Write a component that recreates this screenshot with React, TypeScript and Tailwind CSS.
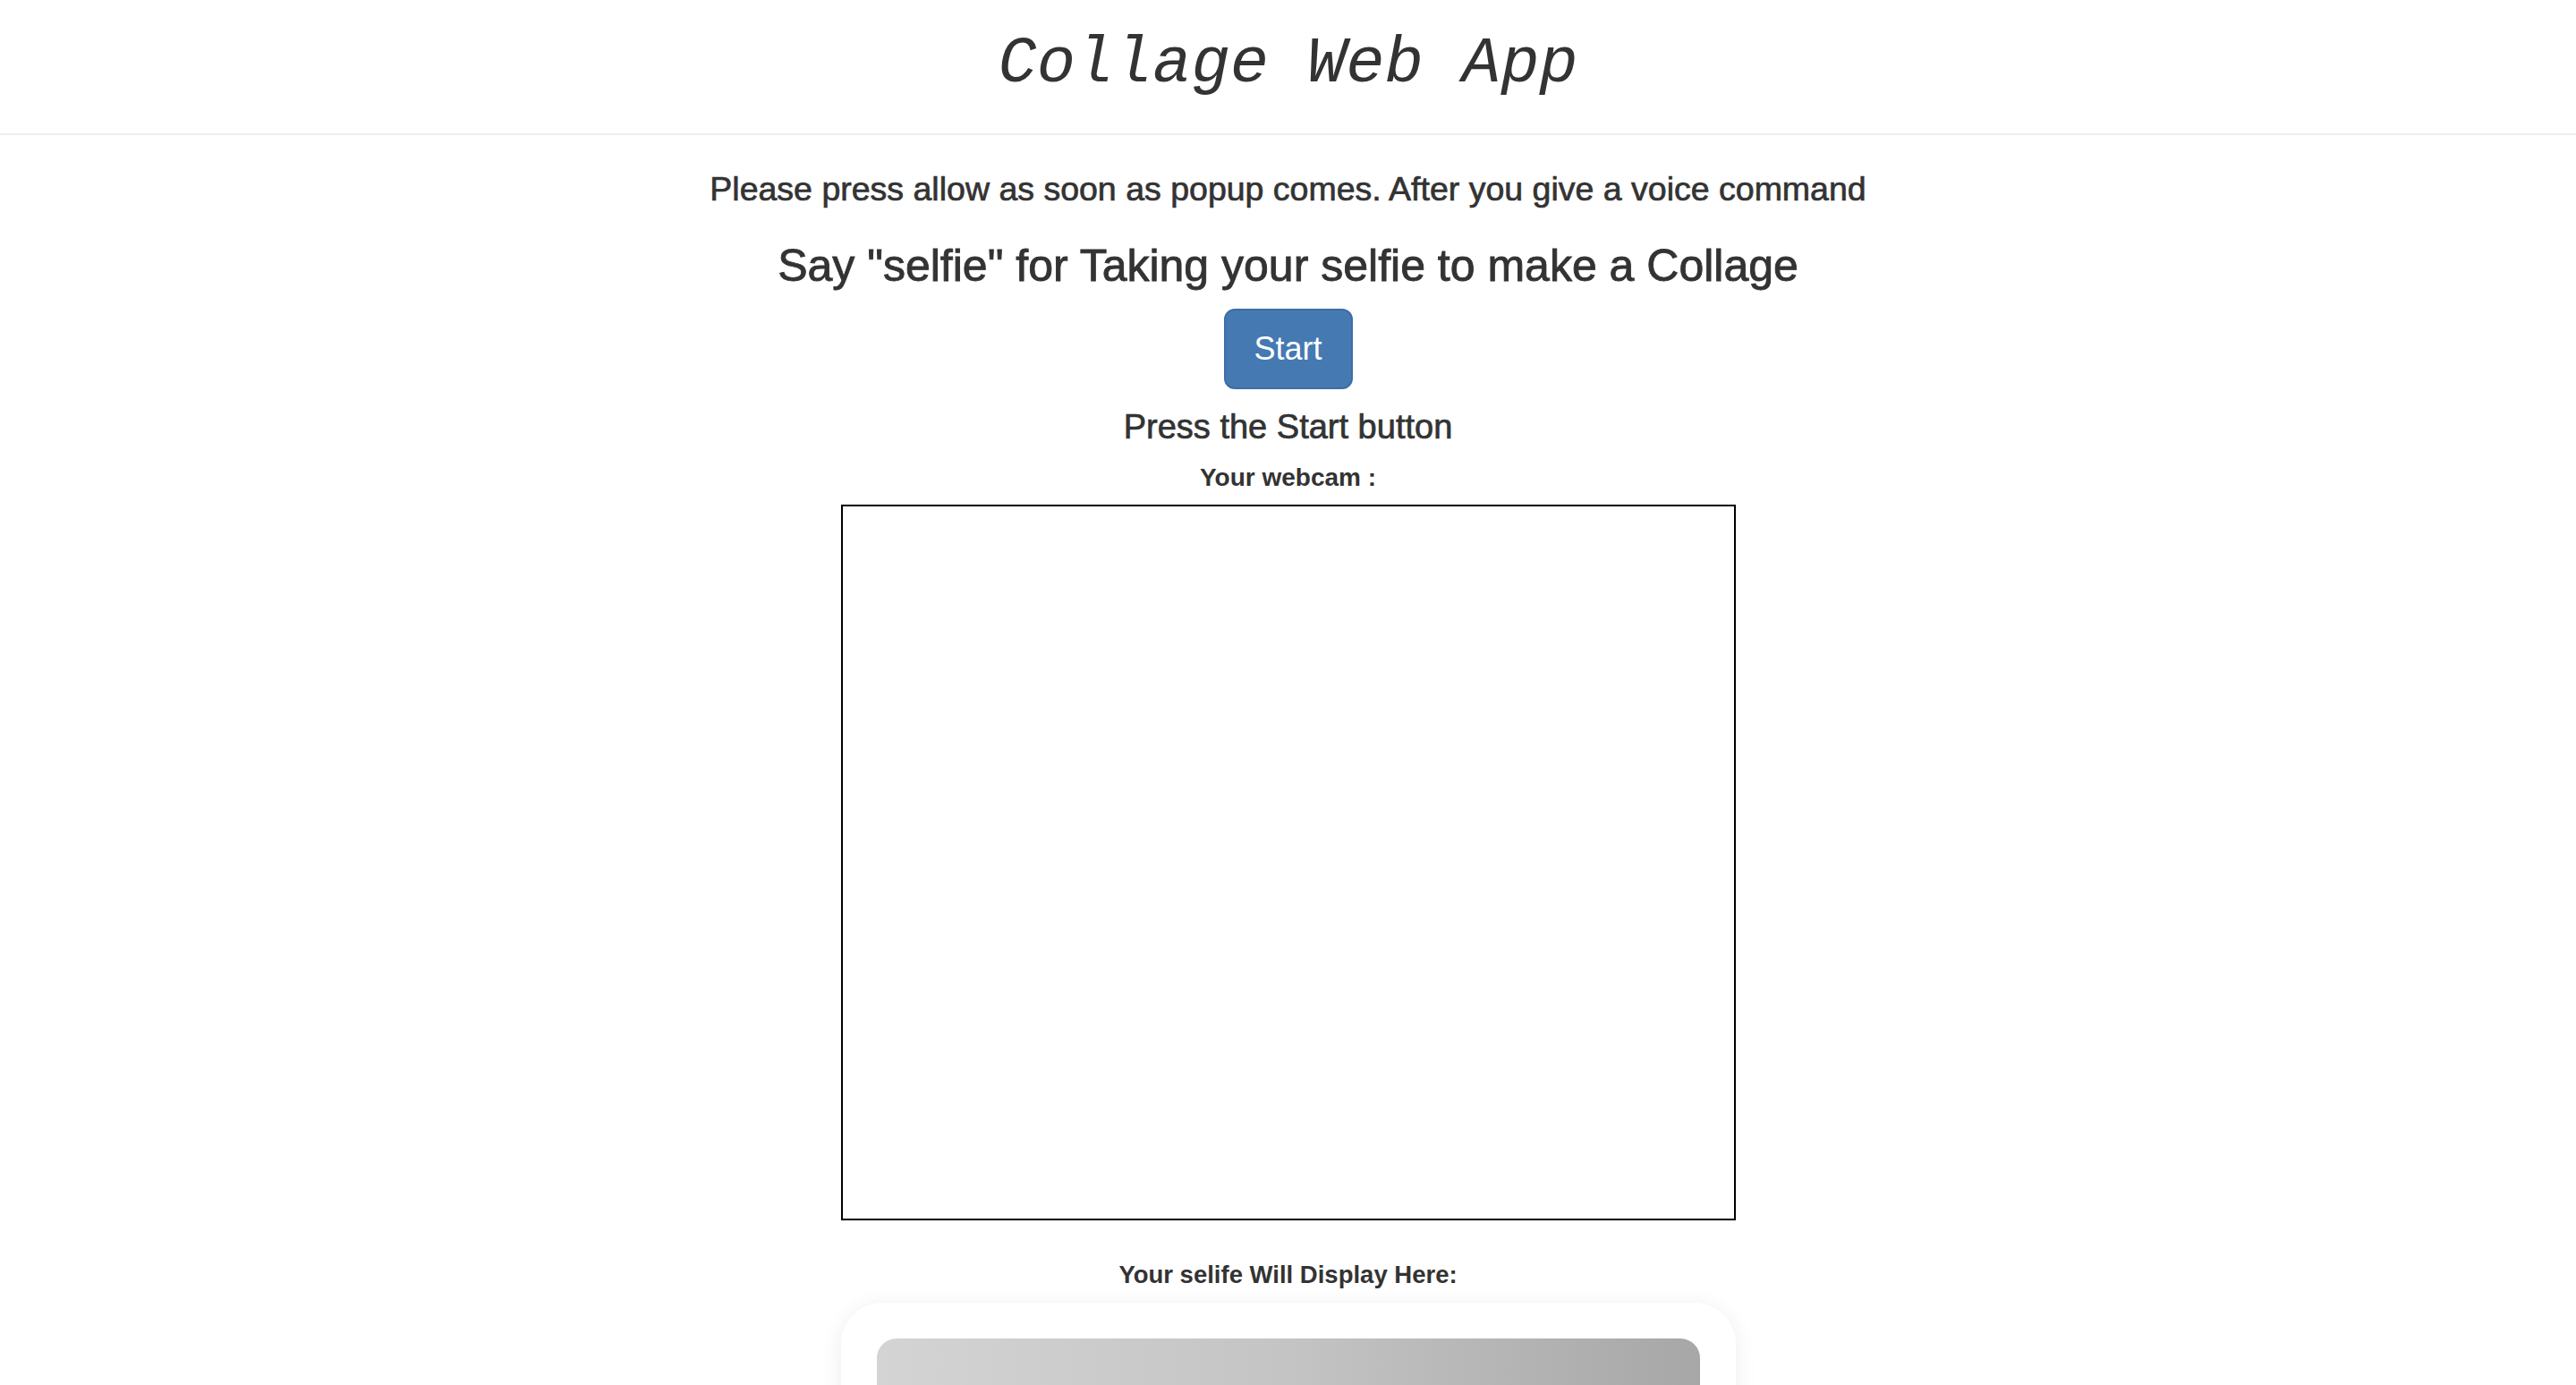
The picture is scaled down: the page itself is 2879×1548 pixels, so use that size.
const App = () => {
  return (
    <div className="min-h-screen bg-white text-[#333333] font-['Liberation_Sans',Arial,sans-serif]">
      {/* Header */}
      <header className="h-[151px] pb-[6px] border-b-2 border-[#eeeeee] flex items-center justify-center">
        <h1 className="text-[72px] leading-none italic font-['Liberation_Mono','Courier_New',monospace] text-[#333333]">
          Collage Web App
        </h1>
      </header>

      <main className="flex flex-col items-center">
        <h4 className="mt-[40px] text-[37.5px] leading-[40px] [-webkit-text-stroke:0.7px_#333333]">
          Please press allow as soon as popup comes. After you give a voice command
        </h4>
        <h3 className="mt-[40px] text-[50px] leading-[52px] [-webkit-text-stroke:0.9px_#333333]">
          Say "selfie" for Taking your selfie to make a Collage
        </h3>

        <button className="mt-[22px] w-[144px] h-[90px] rounded-[12px] bg-[#4579b2] border-2 border-[#3d6ea6] text-white text-[36px] leading-none">
          Start
        </button>

        <p className="mt-[22px] text-[38px] leading-[40px] [-webkit-text-stroke:0.7px_#333333]">Press the Start button</p>

        <p className="mt-[21px] text-[28px] leading-[32px] font-bold">Your webcam :</p>

        {/* Webcam area */}
        <div className="mt-[14px] w-[1000px] h-[800px] border-2 border-black bg-white"></div>

        <p className="mt-[45px] text-[27.5px] leading-[32px] font-bold">Your selife Will Display Here:</p>

        {/* Selfie card */}
        <div className="mt-[15px] mb-[80px] w-[1000px] rounded-[46px] bg-white p-[40px] shadow-[0_4px_24px_rgba(0,0,0,0.08)]">
          <div className="h-[700px] rounded-[22px] bg-gradient-to-r from-[#d4d4d4] via-[#c4c4c4] to-[#a7a7a7]"></div>
        </div>
      </main>
    </div>
  );
};

export default App;
